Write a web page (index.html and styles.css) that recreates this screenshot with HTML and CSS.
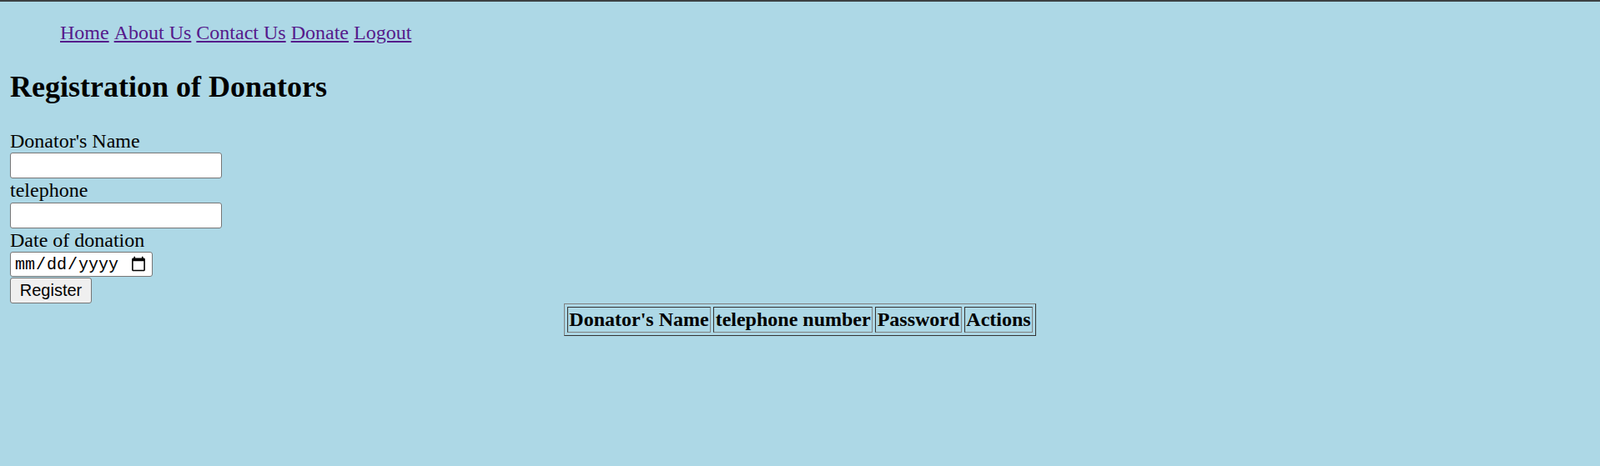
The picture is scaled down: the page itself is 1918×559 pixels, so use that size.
FILE: index.html
```html
<!DOCTYPE html>
<html lang="en">
<head>
<meta charset="utf-8">
<title>Registration of Donators</title>
<link rel="stylesheet" href="styles.css">
</head>
<body>
<ul class="nav">
<li><a href="#">Home</a></li>
<li><a href="#">About Us</a></li>
<li><a href="#">Contact Us</a></li>
<li><a href="#">Donate</a></li>
<li><a href="#">Logout</a></li>
</ul>
<h2 class="title">Registration of Donators</h2>
<form class="form">
<label class="label">Donator's Name</label>
<input class="field" type="text">
<label class="label">telephone</label>
<input class="field" type="text">
<label class="label">Date of donation</label>
<input class="date" type="date">
<button class="btn" type="button">Register</button>
</form>
<table class="grid">
<thead>
<tr><th>Donator's Name</th><th>telephone number</th><th>Password</th><th>Actions</th></tr>
</thead>
</table>
</body>
</html>
```
FILE: styles.css
```css
html {
  border-top: 2px solid #3c4043;
  background: #add8e6;
}
body {
  margin: 0 12px 12px;
  font-family: "Liberation Serif", "Times New Roman", serif;
  font-size: 24px;
  color: #000;
  background: #add8e6;
}
.nav {
  margin: 24px 0;
  padding-left: 60px;
  list-style: none;
}
.nav li {
  display: inline;
}
.nav a {
  color: #551a8b;
  text-decoration: underline;
}
.title {
  font-size: 36px;
  font-weight: bold;
  margin: 30px 0;
}
.form {
  margin: 0;
}
.label {
  display: block;
  line-height: 28.4px;
}
.field {
  display: block;
  box-sizing: border-box;
  width: 254px;
  height: 31px;
  margin: 0;
  padding: 1px 3px;
  border: 1px solid #767676;
  border-radius: 3px;
  background: #fff;
  font-family: "Liberation Sans", Arial, sans-serif;
  font-size: 20px;
}
.date {
  display: block;
  box-sizing: border-box;
  width: 171px;
  height: 30px;
  margin: 0 0 1px;
  padding: 1px 4px;
  border: 1px solid #767676;
  border-radius: 3px;
  background: #fff;
  font-family: "Liberation Mono", "DejaVu Sans Mono", monospace;
  font-size: 20px;
}
.btn {
  display: block;
  box-sizing: border-box;
  width: 98px;
  height: 31px;
  margin: 0;
  padding: 1px 9px;
  border: 1px solid #767676;
  border-radius: 3px;
  background: #efefef;
  color: #000;
  font-family: "Liberation Sans", Arial, sans-serif;
  font-size: 20px;
}
.grid {
  margin: 0 auto;
  border-collapse: separate;
  border-spacing: 3px;
  border: 1px solid;
  border-color: #808080 #333 #333 #808080;
}
.grid th {
  padding: 1px 1.5px;
  border: 1px solid;
  border-color: #333 #808080 #808080 #333;
  font-size: 24px;
  font-weight: bold;
  line-height: 27px;
}
```
